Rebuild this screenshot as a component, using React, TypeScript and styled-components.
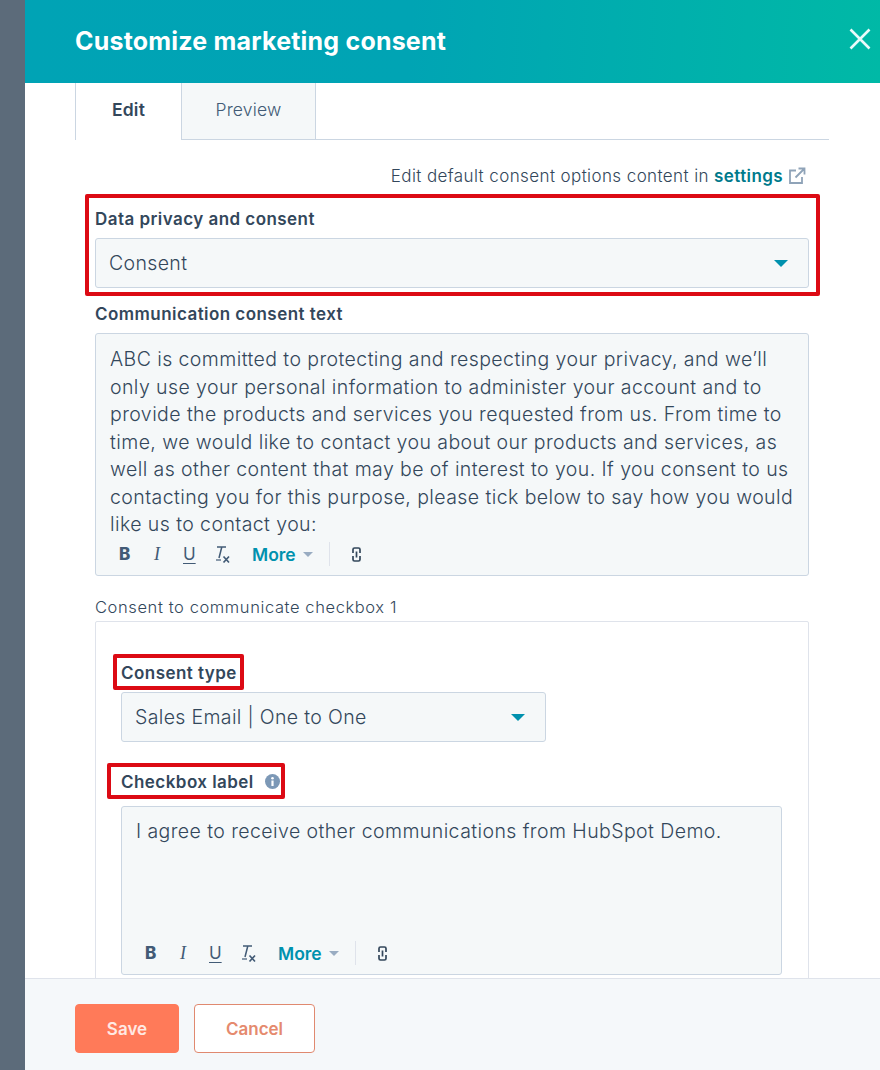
import React from "react";
import styled, { createGlobalStyle } from "styled-components";

const GlobalStyle = createGlobalStyle`
  html, body {
    margin: 0;
    padding: 0;
    background: #5c6b7a;
  }
  * {
    box-sizing: border-box;
  }
`;

const Page = styled.div`
  width: 880px;
  height: 1070px;
  padding-left: 25px;
  background: #5c6b7a;
  overflow: hidden;
  font-family: "Inter", "Liberation Sans", sans-serif;
  color: #33475b;
`;

const Modal = styled.div`
  height: 100%;
  display: flex;
  flex-direction: column;
  background: #fff;
`;

const Header = styled.header`
  flex: 0 0 83px;
  display: flex;
  align-items: center;
  justify-content: space-between;
  padding: 0 8px 0 50px;
  background: linear-gradient(93deg, #00a3b5 0%, #00a4b4 45%, #00b9a6 100%);
`;

const Title = styled.h1`
  margin: 0 0 1px;
  font-size: 25px;
  font-weight: 700;
  letter-spacing: 0.2px;
  color: #fff;
`;

const Close = styled.button`
  display: flex;
  border: 0;
  padding: 0;
  margin-top: -6px;
  background: none;
`;

const Body = styled.div`
  flex: 1;
  min-height: 0;
  overflow: hidden;
  padding: 0 51px 0 50px;
`;

const Tabs = styled.div`
  display: flex;
  height: 57px;
  border-bottom: 1px solid #cbd6e2;
`;

const Tab = styled.div<{ $active?: boolean }>`
  display: flex;
  align-items: center;
  justify-content: center;
  width: ${(p) => (p.$active ? "106px" : "135px")};
  height: ${(p) => (p.$active ? "57px" : "56px")};
  background: ${(p) => (p.$active ? "#fff" : "#f5f8f9")};
  border-left: 1px solid #cbd6e2;
  border-right: ${(p) => (p.$active ? "0" : "1px solid #cbd6e2")};
  font-size: 17.5px;
  font-weight: ${(p) => (p.$active ? 600 : 300)};
  letter-spacing: 0.2px;
  color: ${(p) => (p.$active ? "#33475b" : "#425b76")};
  padding-bottom: 4px;
`;

const SettingsLine = styled.div`
  display: flex;
  justify-content: flex-end;
  align-items: center;
  gap: 5px;
  height: 20px;
  margin-top: 26px;
  padding-right: 23px;
  font-size: 17px;
  font-weight: 300;
  letter-spacing: 0.4px;
  color: #33475b;
`;

const Link = styled.span`
  font-weight: 600;
  color: #007a8c;
`;

const Highlight = styled.div`
  width: 735px;
  height: 102px;
  margin: 8px 0 0 10px;
  padding: 11px 7px 0 6px;
  border: 4px solid #dc0a14;
  border-radius: 2px;
`;

const LabelHighlight = styled.div<{ $inset: number; $width: number }>`
  display: flex;
  align-items: center;
  width: ${(p) => p.$width}px;
  height: 36px;
  margin-left: ${(p) => -p.$inset - 4}px;
  padding: 1px 0 0 ${(p) => p.$inset}px;
  border: 4px solid #dc0a14;
  border-radius: 2px;
`;

const Label = styled.div`
  font-size: 17px;
  font-weight: 600;
  letter-spacing: 0.45px;
  line-height: 20px;
  color: #33475b;
`;

const LabelWithIcon = styled(Label)`
  display: flex;
  align-items: center;
  gap: 11px;
`;

const SelectBox = styled.div<{ $width: number }>`
  display: flex;
  align-items: center;
  justify-content: space-between;
  width: ${(p) => p.$width}px;
  height: 50px;
  padding: 0 20px 0 13px;
  border: 1px solid #cbd6e2;
  border-radius: 3px;
  background: #f5f8f9;
  font-size: 19.5px;
  font-weight: 300;
  letter-spacing: 0.35px;
  color: #33475b;
`;

const Caret = styled.span<{ $size?: "small" }>`
  width: 0;
  height: 0;
  border-style: solid;
  border-color: transparent;
  border-top-color: ${(p) => (p.$size ? "#99acc2" : "#0091ae")};
  border-width: ${(p) => (p.$size ? "5px 5px 0" : "7px 7px 0")};
`;

const Field = styled.div`
  margin: 8px 0 0 20px;
`;

const FieldLabel = styled(Label)`
  margin-bottom: 9px;
`;

const Editor = styled.div<{ $tall?: boolean }>`
  display: flex;
  flex-direction: column;
  justify-content: space-between;
  width: ${(p) => (p.$tall ? "661px" : "714px")};
  height: ${(p) => (p.$tall ? "169px" : "243px")};
  padding: ${(p) => (p.$tall ? "11px" : "12px")} 14px 7px 14px;
  border: 1px solid #cbd6e2;
  border-radius: 3px;
  background: #f5f8f9;
`;

const EditorText = styled.p`
  margin: 0;
  font-size: 19.5px;
  font-weight: 300;
  letter-spacing: 0.42px;
  line-height: 27.5px;
  color: #33475b;
  white-space: nowrap;
`;

const Toolbar = styled.div`
  display: flex;
  align-items: center;
  height: 28px;
  padding-left: 9px;
  color: #425b76;
`;

const ToolButton = styled.span<{ $kind: "bold" | "italic" | "underline" }>`
  width: 32px;
  font-size: ${(p) => (p.$kind === "italic" ? "18px" : "17px")};
  line-height: 20px;
  font-family: ${(p) => (p.$kind === "italic" ? '"Liberation Serif"' : '"Inter"')}, sans-serif;
  font-weight: ${(p) => (p.$kind === "bold" ? 800 : 400)};
  font-style: ${(p) => (p.$kind === "italic" ? "italic" : "normal")};
  text-decoration: ${(p) => (p.$kind === "underline" ? "underline" : "none")};
  text-underline-offset: 3px;
  padding-left: ${(p) => (p.$kind === "italic" ? "3px" : "0")};
`;

const More = styled.span`
  display: flex;
  align-items: center;
  gap: 7px;
  margin-left: 19px;
  font-size: 17.5px;
  font-weight: 600;
  color: #0091ae;
`;

const ToolDivider = styled.span`
  width: 1px;
  height: 24px;
  margin: 0 22px 0 16px;
  background: #dfe3eb;
`;

const SectionTitle = styled.div`
  margin: 21px 0 0 20px;
  font-size: 16.5px;
  font-weight: 300;
  letter-spacing: 0.6px;
  line-height: 20px;
  color: #33475b;
`;

const CheckboxPanel = styled.div`
  width: 714px;
  height: 400px;
  margin: 4px 0 0 20px;
  padding: 32px 25px 0;
  border: 1px solid #dfe3eb;
  border-radius: 2px;
`;

const PanelGap = styled.div<{ $h: number }>`
  height: ${(p) => p.$h}px;
`;

const SelectOffset = styled.div`
  margin-top: 2px;
`;

const Footer = styled.footer`
  flex: 0 0 92px;
  display: flex;
  gap: 15px;
  padding: 25px 0 0 50px;
  border-top: 1px solid #dfe3eb;
  background: #f5f8fa;
`;

const Button = styled.button<{ $primary?: boolean }>`
  height: 49px;
  width: ${(p) => (p.$primary ? "104px" : "121px")};
  border: 1px solid ${(p) => (p.$primary ? "#ff7a59" : "#e0896f")};
  border-radius: 4px;
  background: ${(p) => (p.$primary ? "#ff7a59" : "#fff")};
  color: ${(p) => (p.$primary ? "#ffe9e3" : "#e58a6e")};
  font-family: inherit;
  font-size: 17px;
  font-weight: 600;
`;

const CloseIcon = () => (
  <svg width="24" height="24" viewBox="0 0 24 24" fill="none" stroke="#eafafa" strokeWidth="2.6">
    <path d="M2.5 2.5l19 19M21.5 2.5l-19 19" />
  </svg>
);

const ExternalIcon = () => (
  <svg width="18" height="18" viewBox="0 0 18 18" fill="none" stroke="#8fa3b8" strokeWidth="1.8">
    <path d="M8 3.500H2V16H14V10M7.500 10.500L16 2M10.500 1.500H16.500V7.500" />
  </svg>
);

const InfoIcon = () => (
  <svg width="15" height="15" viewBox="0 0 15 15">
    <circle cx="7.500" cy="7.500" r="7.500" fill="#7c98b6" />
    <rect x="6.400" y="6.500" width="2.200" height="5.500" fill="#fff" />
    <circle cx="7.500" cy="4.200" r="1.300" fill="#fff" />
  </svg>
);

const LinkIcon = () => (
  <svg width="9" height="15" viewBox="0 0 9 15" fill="none" stroke="#33475b" strokeWidth="1.7">
    <path d="M1 6V2.500Q1 1 2.500 1H6.500Q8 1 8 2.500V6M1 9V12.500Q1 14 2.500 14H6.500Q8 14 8 12.500V9M4.500 4.500V10.500" />
  </svg>
);

const ClearFormatIcon = () => (
  <svg width="18" height="19" viewBox="0 0 18 19" fill="none" stroke="#425b76">
    <path d="M2 2H11M6.800 2L4 13" strokeWidth="1.500" />
    <path d="M1 15H6" strokeWidth="1.200" />
    <path d="M8.500 11.500L14 17.500M14 11.500L8.500 17.500" strokeWidth="1.700" />
  </svg>
);

const EditorToolbar = () => (
  <Toolbar>
    <ToolButton $kind="bold">B</ToolButton>
    <ToolButton $kind="italic">I</ToolButton>
    <ToolButton $kind="underline">U</ToolButton>
    <ClearFormatIcon />
    <More>
      More <Caret $size="small" />
    </More>
    <ToolDivider />
    <LinkIcon />
  </Toolbar>
);

const App = () => {
  return (
    <Page>
      <GlobalStyle />
      <Modal>
        <Header>
          <Title>Customize marketing consent</Title>
          <Close aria-label="Close">
            <CloseIcon />
          </Close>
        </Header>
        <Body>
          <Tabs>
            <Tab $active>Edit</Tab>
            <Tab>Preview</Tab>
          </Tabs>
          <SettingsLine>
            <span>
              Edit default consent options content in <Link>settings</Link>
            </span>
            <ExternalIcon />
          </SettingsLine>
          <Highlight>
            <FieldLabel>Data privacy and consent</FieldLabel>
            <SelectBox $width={714}>
              Consent <Caret />
            </SelectBox>
          </Highlight>
          <Field>
            <FieldLabel>Communication consent text</FieldLabel>
            <Editor>
              <EditorText>
                ABC is committed to protecting and respecting your privacy, and we’ll
                <br />
                only use your personal information to administer your account and to
                <br />
                provide the products and services you requested from us. From time to
                <br />
                time, we would like to contact you about our products and services, as
                <br />
                well as other content that may be of interest to you. If you consent to us
                <br />
                contacting you for this purpose, please tick below to say how you would
                <br />
                like us to contact you:
              </EditorText>
              <EditorToolbar />
            </Editor>
          </Field>
          <SectionTitle>Consent to communicate checkbox 1</SectionTitle>
          <CheckboxPanel>
            <LabelHighlight $inset={4} $width={131}>
              <Label>Consent type</Label>
            </LabelHighlight>
            <SelectOffset>
              <SelectBox $width={425}>
                Sales Email | One to One <Caret />
              </SelectBox>
            </SelectOffset>
            <PanelGap $h={21} />
            <LabelHighlight $inset={10} $width={178}>
              <LabelWithIcon>
                Checkbox label <InfoIcon />
              </LabelWithIcon>
            </LabelHighlight>
            <PanelGap $h={7} />
            <Editor $tall>
              <EditorText>I agree to receive other communications from HubSpot Demo.</EditorText>
              <EditorToolbar />
            </Editor>
          </CheckboxPanel>
        </Body>
        <Footer>
          <Button $primary>Save</Button>
          <Button>Cancel</Button>
        </Footer>
      </Modal>
    </Page>
  );
};

export default App;
